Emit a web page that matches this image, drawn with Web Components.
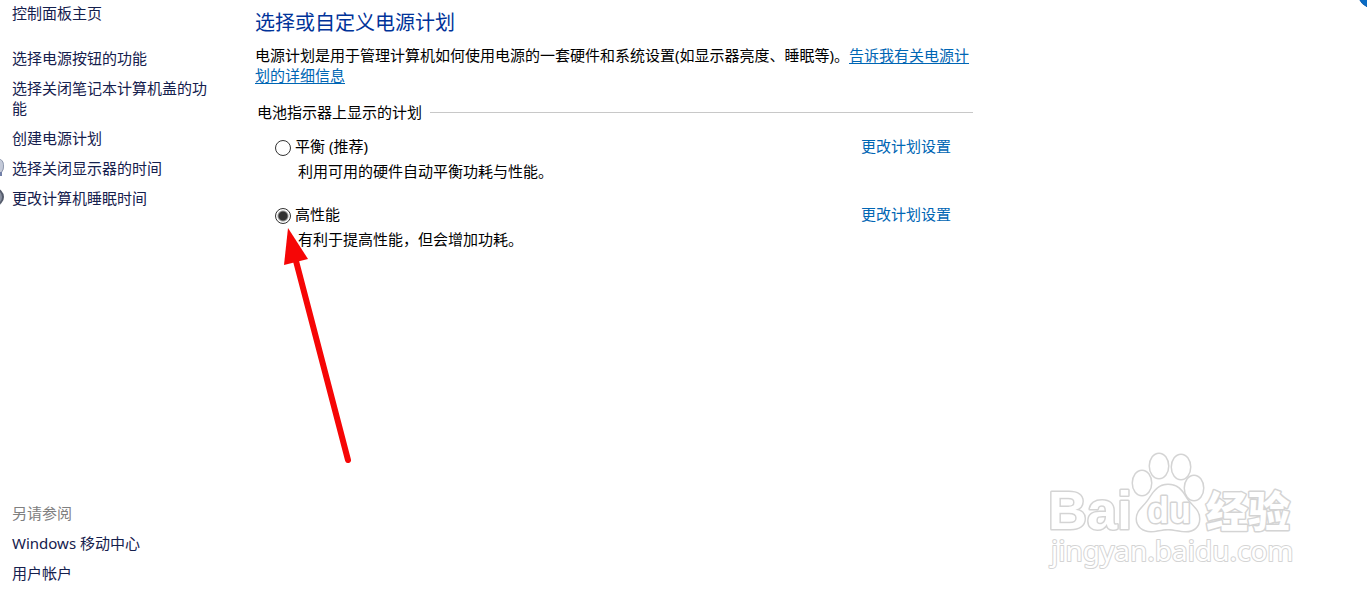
<!DOCTYPE html>
<html lang="zh-CN">
<head>
<meta charset="utf-8">
<meta name="viewport" content="width=device-width, initial-scale=1">
<title>电源选项</title>
<style>
  body {
    margin: 0;
    background: #fff;
    color: #000;
    font: 15px/20px "Noto Sans", "Noto Sans CJK SC", sans-serif;
  }
</style>
</head>
<body>
<power-page>
  <side-nav slot="side">
    <nav-link>控制面板主页</nav-link>
    <nav-link slot="tasks">选择电源按钮的功能</nav-link>
    <nav-link slot="tasks">选择关闭笔记本计算机盖的功能</nav-link>
    <nav-link slot="tasks">创建电源计划</nav-link>
    <nav-link slot="tasks" icon="display">选择关闭显示器的时间</nav-link>
    <nav-link slot="tasks" icon="sleep">更改计算机睡眠时间</nav-link>
    <nav-link slot="related">Windows 移动中心</nav-link>
    <nav-link slot="related">用户帐户</nav-link>
  </side-nav>
  <plan-list heading="电池指示器上显示的计划">
    <power-plan name="平衡 (推荐)">利用可用的硬件自动平衡功耗与性能。</power-plan>
    <power-plan name="高性能" checked>有利于提高性能，但会增加功耗。</power-plan>
  </plan-list>
  <help-button slot="over"></help-button>
  <pointer-arrow slot="over"></pointer-arrow>
  <site-mark slot="over"></site-mark>
</power-page>

<script>
class PowerPage extends HTMLElement {
  constructor() {
    super();
    this.attachShadow({ mode: "open" });
    this.shadowRoot.innerHTML = `
      <style>
        :host {
          display: flex;
          position: relative;
          min-height: 100vh;
          overflow: hidden;
        }
        aside {
          display: flex;
          flex: 0 0 255px;
        }
        main {
          flex: 0 1 718px;
          min-width: 0;
          padding-top: 9px;
        }
        h1 {
          margin: 0 0 8px;
          font-size: 20px;
          line-height: 28px;
          font-weight: 400;
          color: #003399;
        }
        p {
          margin: 0 0 17px;
        }
        p a {
          color: #0066b4;
          text-underline-offset: 2px;
        }
      </style>
      <aside><slot name="side"></slot></aside>
      <main>
        <h1>选择或自定义电源计划</h1>
        <p>电源计划是用于管理计算机如何使用电源的一套硬件和系统设置(如显示器亮度、睡眠等)。<a href="#">告诉我有关电源计划的详细信息</a></p>
        <slot></slot>
      </main>
      <slot name="over"></slot>
    `;
  }
}

class SideNav extends HTMLElement {
  constructor() {
    super();
    this.attachShadow({ mode: "open" });
    this.shadowRoot.innerHTML = `
      <style>
        :host {
          display: flex;
          flex: 1;
          padding: 3px 40px 16px 0;
        }
        nav {
          display: flex;
          flex: 1;
          flex-direction: column;
          justify-content: space-between;
        }
        .group {
          display: flex;
          flex-direction: column;
          gap: 10px;
        }
        .tasks {
          margin-top: 25px;
        }
        h2 {
          margin: 0;
          padding-left: 12px;
          font-size: 15px;
          line-height: 20px;
          font-weight: 400;
          color: #808080;
        }
      </style>
      <nav>
        <div>
          <slot></slot>
          <div class="group tasks"><slot name="tasks"></slot></div>
        </div>
        <div class="group">
          <h2>另请参阅</h2>
          <slot name="related"></slot>
        </div>
      </nav>
    `;
  }
}

const navIcons = {
  display: `
    <path d="M-4 1C2 0 4 4 4 8c0 3-1 5-2 6v4h-6z" fill="#c3c9d8"/>
    <path d="M-2 1C2 1 3.500 4 3.500 8c0 3-1 5-2 6" fill="none" stroke="#8f98ad"/>
    <path d="M0 14h2v4H0z" fill="#7380a8"/>`,
  sleep: `
    <circle cx="-5" cy="9" r="9" fill="#555c6c"/>
    <circle cx="-5" cy="9" r="7" fill="#8990a0"/>`,
};

class NavLink extends HTMLElement {
  constructor() {
    super();
    this.attachShadow({ mode: "open" });
  }

  connectedCallback() {
    const icon = navIcons[this.getAttribute("icon")] || "";
    this.shadowRoot.innerHTML = `
      <style>
        :host {
          display: block;
        }
        a {
          display: flex;
          gap: 8px;
          color: #15204d;
          text-decoration: none;
        }
        a:hover {
          text-decoration: underline;
        }
        svg {
          flex: none;
        }
      </style>
      <a href="#">
        <svg width="4" height="20" viewBox="0 0 4 20" aria-hidden="true">${icon}</svg>
        <span><slot></slot></span>
      </a>
    `;
  }
}

class PlanList extends HTMLElement {
  constructor() {
    super();
    this.attachShadow({ mode: "open" });
  }

  connectedCallback() {
    this.shadowRoot.innerHTML = `
      <style>
        :host {
          display: block;
        }
        fieldset {
          margin: 0;
          padding: 0;
          border: 0;
          min-width: 0;
        }
        legend {
          display: flex;
          align-items: center;
          gap: 8px;
          box-sizing: border-box;
          width: 100%;
          padding: 0 0 0 2px;
        }
        legend::after {
          content: "";
          flex: 1;
          border-top: 1px solid #c8c8c8;
        }
        .plans {
          display: flex;
          flex-direction: column;
          gap: 23px;
          padding: 14px 22px 0 20px;
        }
      </style>
      <fieldset>
        <legend>${this.getAttribute("heading")}</legend>
        <div class="plans"><slot></slot></div>
      </fieldset>
    `;

    // radios in separate shadow roots do not group by name
    this.addEventListener("plan-select", (event) => {
      this.querySelectorAll("power-plan").forEach((plan) => {
        plan.toggleAttribute("checked", plan === event.target);
      });
    });
  }
}

class PowerPlan extends HTMLElement {
  constructor() {
    super();
    this.attachShadow({ mode: "open" });
  }

  static get observedAttributes() {
    return ["checked"];
  }

  attributeChangedCallback() {
    const radio = this.shadowRoot.querySelector("input");
    if (radio) {
      radio.checked = this.hasAttribute("checked");
    }
  }

  connectedCallback() {
    this.shadowRoot.innerHTML = `
      <style>
        :host {
          display: block;
        }
        .row {
          display: flex;
          justify-content: space-between;
        }
        .choice {
          display: flex;
          align-items: flex-end;
          gap: 4px;
        }
        input {
          appearance: none;
          box-sizing: border-box;
          width: 16px;
          height: 16px;
          margin: 0;
          border: 1px solid #333;
          border-radius: 50%;
          background: #fff;
        }
        input:checked {
          background: radial-gradient(circle, #333 4px, #fff 6px);
        }
        a {
          color: #0066b4;
          text-decoration: none;
        }
        a:hover {
          text-decoration: underline;
        }
        p {
          margin: 5px 0 0;
          padding-left: 23px;
        }
      </style>
      <div class="row">
        <div class="choice">
          <input type="radio" id="plan" aria-describedby="about">
          <label for="plan">${this.getAttribute("name")}</label>
        </div>
        <a href="#">更改计划设置</a>
      </div>
      <p id="about"><slot></slot></p>
    `;

    const radio = this.shadowRoot.querySelector("input");
    radio.checked = this.hasAttribute("checked");
    radio.addEventListener("change", () => {
      this.dispatchEvent(new CustomEvent("plan-select", { bubbles: true }));
    });
  }
}

class HelpButton extends HTMLElement {
  constructor() {
    super();
    this.attachShadow({ mode: "open" });
    this.shadowRoot.innerHTML = `
      <style>
        :host {
          position: absolute;
          top: 0;
          right: 0;
        }
        button {
          display: block;
          padding: 0;
          border: 0;
          background: none;
        }
        svg {
          display: block;
        }
      </style>
      <button type="button" aria-label="帮助">
        <svg width="8" height="8" viewBox="0 0 8 8">
          <circle cx="14" cy="-7" r="15" fill="#0a6cc4" stroke="#0a5cb0"/>
        </svg>
      </button>
    `;
  }
}

class PointerArrow extends HTMLElement {
  constructor() {
    super();
    this.attachShadow({ mode: "open" });
    this.shadowRoot.innerHTML = `
      <style>
        :host {
          position: absolute;
          top: 228px;
          left: 284px;
          pointer-events: none;
        }
        svg {
          display: block;
        }
      </style>
      <svg width="68" height="236" viewBox="0 0 68 236" aria-hidden="true">
        <path d="M12 33L64 232" stroke="#f60606" stroke-width="6" stroke-linecap="round"/>
        <path d="M4 0L24 31L0 37z" fill="#f60606"/>
      </svg>
    `;
  }
}

class SiteMark extends HTMLElement {
  constructor() {
    super();
    this.attachShadow({ mode: "open" });
    this.shadowRoot.innerHTML = `
      <style>
        :host {
          position: absolute;
          right: 67px;
          bottom: 24px;
          pointer-events: none;
        }
        svg {
          display: block;
        }
        text, path, ellipse {
          fill: #fff;
          stroke: #d4d4d4;
          stroke-width: 3px;
          stroke-linejoin: round;
          paint-order: stroke;
        }
        text {
          font-family: "Liberation Sans", "Noto Sans CJK SC", sans-serif;
          font-weight: 700;
        }
        .cjk {
          font-weight: 900;
        }
        .url {
          font-family: "Noto Sans", sans-serif;
          font-weight: 400;
          stroke-width: 2px;
        }
      </style>
      <svg width="260" height="130" viewBox="0 0 260 130">
        <ellipse cx="102" cy="38" rx="9" ry="12"/>
        <ellipse cx="119" cy="21" rx="9" ry="12"/>
        <ellipse cx="141" cy="22" rx="9" ry="12"/>
        <ellipse cx="154" cy="43" rx="9" ry="12"/>
        <path d="M128 40c12 0 15 9 20 16 6 7 11 10 11 18 0 8-6 12-13 12-7 0-11-2-18-2s-11 2-17 2c-8 0-14-5-14-12 0-8 6-11 11-18 5-7 9-16 20-16z"/>
        <text x="8" y="84" font-size="54">Bai</text>
        <text x="107" y="78" font-size="36">du</text>
        <text class="cjk" x="166" y="82" font-size="42">经验</text>
        <text class="url" x="11" y="116" font-size="28">jingyan.baidu.com</text>
      </svg>
    `;
  }
}

customElements.define("power-page", PowerPage);
customElements.define("side-nav", SideNav);
customElements.define("nav-link", NavLink);
customElements.define("plan-list", PlanList);
customElements.define("power-plan", PowerPlan);
customElements.define("help-button", HelpButton);
customElements.define("pointer-arrow", PointerArrow);
customElements.define("site-mark", SiteMark);
</script>
</body>
</html>
